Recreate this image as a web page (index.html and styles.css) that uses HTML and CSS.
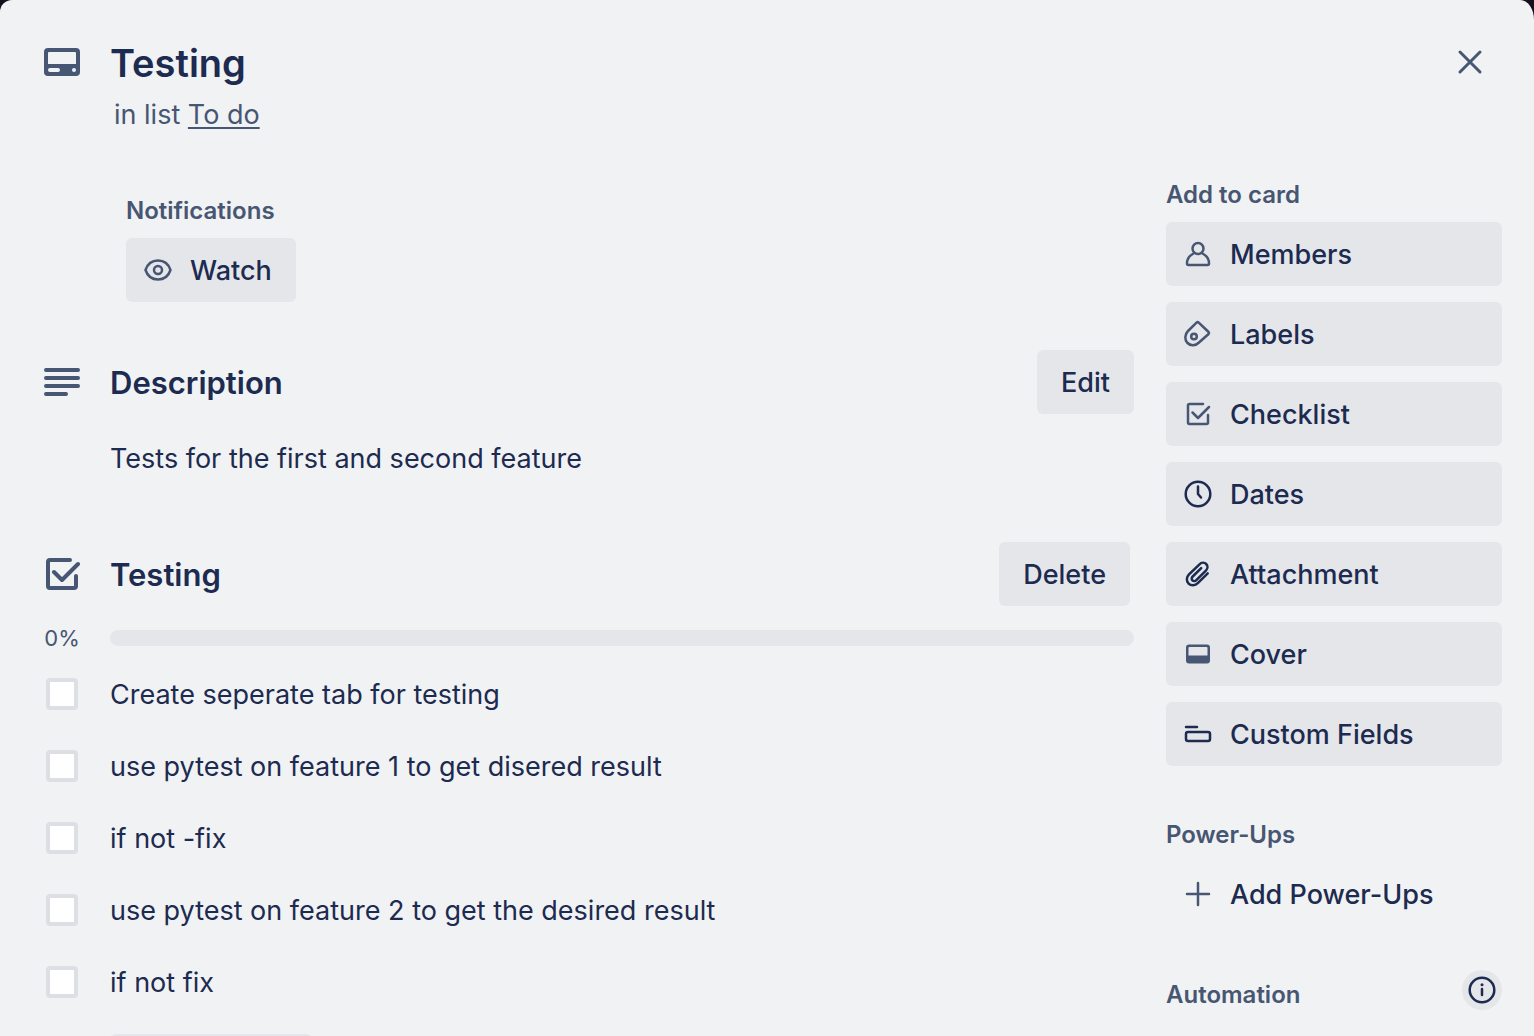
FILE: index.html
```html
<!DOCTYPE html>
<html lang="en">
<head>
<meta charset="utf-8">
<meta name="viewport" content="width=device-width, initial-scale=1">
<title>Testing</title>
<link rel="stylesheet" href="styles.css">
</head>
<body>
<div class="dialog" role="dialog" aria-labelledby="card-title">
  <header class="card-header">
    <span class="icon-cell">
      <svg class="icon-large" viewBox="0 0 36 36" aria-hidden="true"><path fill="currentColor" fill-rule="evenodd" d="M4 4h28a4 4 0 0 1 4 4v20a4 4 0 0 1-4 4H4a4 4 0 0 1-4-4V8a4 4 0 0 1 4-4Zm1 4a1 1 0 0 0-1 1v11h28V9a1 1 0 0 0-1-1ZM6 24a2 2 0 0 0 0 4h8a2 2 0 0 0 0-4Zm24 0a2 2 0 1 0 0 4 2 2 0 0 0 0-4Z"/></svg>
    </span>
    <div class="heading">
      <h1 class="card-title" id="card-title">Testing</h1>
      <p class="card-list">in list <a href="#">To do</a></p>
    </div>
    <button class="close" type="button" aria-label="Close">
      <svg class="icon-close" viewBox="0 0 32 32" aria-hidden="true"><path class="stroke-wide" d="M6 6l20 20M26 6L6 26"/></svg>
    </button>
  </header>

  <div class="columns">
    <main class="main">
      <section class="notifications">
        <h3 class="label">Notifications</h3>
        <button class="button with-icon" type="button">
          <svg class="icon soft" viewBox="0 0 32 32" aria-hidden="true"><path class="stroke" d="M3.500 16C5.500 10 10 6.500 16 6.500S26.500 10 28.500 16C26.500 22 22 25.500 16 25.500S5.500 22 3.500 16Z"/><circle class="stroke" cx="16" cy="16" r="4"/></svg>
          Watch
        </button>
      </section>

      <section class="section">
        <span class="icon-cell">
          <svg class="icon-large" viewBox="0 0 36 36" aria-hidden="true"><path class="stroke-bar" d="M2 6h32M2 14h32M2 22h32M2 30h20"/></svg>
        </span>
        <div class="section-head">
          <h2 class="section-title">Description</h2>
          <button class="button" type="button">Edit</button>
        </div>
        <p class="description">Tests for the first and second feature</p>
      </section>

      <section class="section">
        <span class="icon-cell">
          <svg class="icon-large" viewBox="0 0 36 36" aria-hidden="true"><path class="stroke-bar" d="M26 4H6a2 2 0 0 0-2 2v24a2 2 0 0 0 2 2h24a2 2 0 0 0 2-2V20M10 16l8 8L34 8"/></svg>
        </span>
        <div class="section-head inset">
          <h2 class="section-title">Testing</h2>
          <button class="button" type="button">Delete</button>
        </div>
        <span class="percent">0%</span>
        <div class="track" role="progressbar" aria-label="Checklist progress" aria-valuenow="0" aria-valuemin="0" aria-valuemax="100"></div>
        <ul class="checklist">
          <li class="item"><span class="icon-cell"><input class="check" type="checkbox" id="i1"></span><label for="i1">Create seperate tab for testing</label></li>
          <li class="item"><span class="icon-cell"><input class="check" type="checkbox" id="i2"></span><label for="i2">use pytest on feature 1 to get disered result</label></li>
          <li class="item"><span class="icon-cell"><input class="check" type="checkbox" id="i3"></span><label for="i3">if not -fix</label></li>
          <li class="item"><span class="icon-cell"><input class="check" type="checkbox" id="i4"></span><label for="i4">use pytest on feature 2 to get the desired result</label></li>
          <li class="item"><span class="icon-cell"><input class="check" type="checkbox" id="i5"></span><label for="i5">if not fix</label></li>
        </ul>
        <button class="button add-item" type="button">Add an item</button>
      </section>
    </main>

    <aside class="sidebar">
      <section>
        <h3 class="label">Add to card</h3>
        <div class="actions">
          <button class="button with-icon" type="button">
            <svg class="icon soft" viewBox="0 0 32 32" aria-hidden="true"><circle class="stroke" cx="16" cy="10.500" r="5.500"/><path class="stroke" d="M11.500 15.500C7.500 17.500 5 21.500 5 25.500a1.500 1.500 0 0 0 1.500 1.500h19a1.500 1.500 0 0 0 1.500-1.500c0-4-2.500-8-6.500-10"/></svg>
            Members
          </button>
          <button class="button with-icon" type="button">
            <svg class="icon soft" viewBox="0 0 32 32" aria-hidden="true"><path class="stroke" d="M14.300 4.800 6 13C2.500 16.500 2.500 22 5.500 25s8 3 11.500-.5l9.600-8.500a1.500 1.500 0 0 0 0-2L17 4.800a2 2 0 0 0-2.700 0Z"/><circle class="stroke" cx="12" cy="18.500" r="2.800"/></svg>
            Labels
          </button>
          <button class="button with-icon" type="button">
            <svg class="icon soft" viewBox="0 0 32 32" aria-hidden="true"><path class="stroke" d="M21 6H7.500A1.500 1.500 0 0 0 6 7.500v17A1.500 1.500 0 0 0 7.500 26h17a1.500 1.500 0 0 0 1.500-1.500V17M10.500 14.500l5.500 5.500L27 9"/></svg>
            Checklist
          </button>
          <button class="button with-icon" type="button">
            <svg class="icon" viewBox="0 0 32 32" aria-hidden="true"><circle class="stroke" cx="16" cy="16" r="12.300"/><path class="stroke" d="M16 8.500V16l3 3.500"/></svg>
            Dates
          </button>
          <button class="button with-icon" type="button">
            <svg class="icon" viewBox="0 0 32 32" aria-hidden="true"><path class="stroke" d="M25.700 15.300 15.800 25.200c-2.600 2.600-6.700 2.900-9.200.4s-2.200-6.600.4-9.200L17.500 6.300c1.900-1.900 4.900-2.100 6.700-.3s1.600 4.700-.3 6.600l-9.600 9.500c-1.200 1.200-2.900 1.300-3.900.3s-.9-2.700.3-3.900l8.500-8.300"/></svg>
            Attachment
          </button>
          <button class="button with-icon" type="button">
            <svg class="icon soft" viewBox="0 0 32 32" aria-hidden="true"><path fill="currentColor" fill-rule="evenodd" d="M7 6.500h18a3 3 0 0 1 3 3v13a3 3 0 0 1-3 3H7a3 3 0 0 1-3-3v-13a3 3 0 0 1 3-3ZM7.500 9a1 1 0 0 0-1 1v7.500h19V10a1 1 0 0 0-1-1Z"/></svg>
            Cover
          </button>
          <button class="button with-icon" type="button">
            <svg class="icon" viewBox="0 0 32 32" aria-hidden="true"><path class="stroke" d="M4 9h11"/><rect class="stroke" x="4" y="14" width="24" height="9" rx="2"/></svg>
            Custom Fields
          </button>
        </div>
      </section>
      <section>
        <h3 class="label">Power-Ups</h3>
        <div class="actions">
          <button class="button with-icon plain" type="button">
            <svg class="icon soft" viewBox="0 0 32 32" aria-hidden="true"><path class="stroke" d="M16 5v22M5 16h22"/></svg>
            Add Power-Ups
          </button>
        </div>
      </section>
      <section class="automation">
        <h3 class="label">Automation</h3>
        <button class="info" type="button" aria-label="About automation">
          <svg class="icon-info" viewBox="0 0 32 32" aria-hidden="true"><circle class="stroke" cx="16" cy="16" r="12.300"/><path class="stroke" d="M16 15v6"/><circle cx="16" cy="10.800" r="1.500" fill="currentColor"/></svg>
        </button>
      </section>
    </aside>
  </div>
</div>
</body>
</html>
```
FILE: styles.css
```css
:root {
  --surface: #f1f2f4;
  --fill: #e4e6ea;
  --line: #dddfe5;
  --text: #1c2b4f;
  --soft: #475672;
}

* {
  box-sizing: border-box;
}

body {
  height: 100vh;
  margin: 0;
  overflow: hidden;
  background: #14101f;
  color: var(--text);
  font: 400 27px/42px Inter, "Liberation Sans", sans-serif;
}

h1, h2, h3, p, ul {
  margin: 0;
  padding: 0;
}

.dialog {
  height: 100%;
  padding: 38px 32px 0;
  overflow-y: auto;
  scrollbar-width: none;
  background: var(--surface);
  border-radius: 12px 14px 0 0 / 12px 20px 0 0;
}

.card-header {
  display: grid;
  grid-template-columns: 60px 1fr 64px;
  column-gap: 18px;
  align-items: start;
}

.icon-cell {
  display: flex;
  align-items: center;
  justify-content: center;
  height: 48px;
  color: var(--soft);
}

.card-title {
  font-size: 38px;
  font-weight: 600;
  line-height: 50px;
}

.card-list {
  padding: 6px 4px 0;
  color: var(--soft);
}

.card-list a {
  color: inherit;
  text-decoration-thickness: 2px;
  text-underline-offset: 3px;
}

.close {
  display: grid;
  place-items: center;
  width: 64px;
  height: 48px;
  padding: 0;
  border: 0;
  background: none;
  color: var(--soft);
}

.columns {
  display: grid;
  grid-template-columns: 1fr 336px;
  column-gap: 32px;
  padding-top: 34px;
}

.main {
  display: grid;
  align-content: start;
  padding-top: 16px;
}

.notifications {
  margin: 0 0 48px 94px;
}

.label {
  padding-bottom: 2px;
  color: var(--soft);
  font-size: 24px;
  font-weight: 600;
  line-height: 50px;
}

.button {
  height: 64px;
  padding: 2px 24px 0;
  border: 0;
  border-radius: 6px;
  background: var(--fill);
  color: var(--text);
  font: inherit;
  font-weight: 500;
}

.with-icon {
  display: flex;
  align-items: center;
  gap: 16px;
  padding-left: 16px;
}

.plain {
  background: none;
}

.icon {
  flex: none;
  width: 32px;
  height: 32px;
  margin-bottom: 2px;
}

.icon-large {
  width: 36px;
  height: 36px;
}

.icon-close,
.icon-info {
  width: 32px;
  height: 32px;
}

.soft {
  color: var(--soft);
}

.stroke,
.stroke-wide,
.stroke-bar {
  fill: none;
  stroke: currentColor;
  stroke-width: 2.5;
  stroke-linecap: round;
  stroke-linejoin: round;
}

.stroke-wide {
  stroke-width: 3;
}

.stroke-bar {
  stroke-width: 4;
}

.section {
  display: grid;
  grid-template-columns: 60px 1fr;
  column-gap: 18px;
  align-items: center;
  margin-bottom: 62px;
}

.section-head {
  display: flex;
  align-items: center;
  justify-content: space-between;
}

.inset {
  padding-right: 4px;
}

.section-title {
  padding-top: 2px;
  font-size: 31px;
  font-weight: 600;
}

.description {
  grid-column: 2;
  padding-top: 24px;
}

.percent {
  margin-top: 12px;
  color: var(--soft);
  font-size: 22px;
  line-height: 40px;
  text-align: center;
}

.track {
  height: 16px;
  margin-top: 12px;
  border-radius: 8px;
  background: var(--fill);
}

.checklist {
  grid-column: 1 / -1;
  list-style: none;
}

.item {
  display: grid;
  grid-template-columns: 60px 1fr;
  column-gap: 18px;
  align-items: center;
  min-height: 72px;
}

.item label {
  padding-top: 2px;
}

.check {
  width: 32px;
  height: 32px;
  margin: 0;
  appearance: none;
  border: 4px solid var(--line);
  border-radius: 4px;
  background: #fff;
}

.check:checked {
  background: #0c66e4;
}

.add-item {
  grid-column: 2;
  justify-self: start;
  margin-top: 16px;
}

.sidebar {
  display: flex;
  flex-direction: column;
  gap: 44px;
}

.actions {
  display: grid;
  gap: 16px;
}

.automation {
  display: flex;
  align-items: flex-start;
  justify-content: space-between;
}

.info {
  display: grid;
  place-items: center;
  width: 40px;
  height: 40px;
  padding: 0;
  border: 0;
  border-radius: 50%;
  background: var(--fill);
  color: var(--text);
}
```
